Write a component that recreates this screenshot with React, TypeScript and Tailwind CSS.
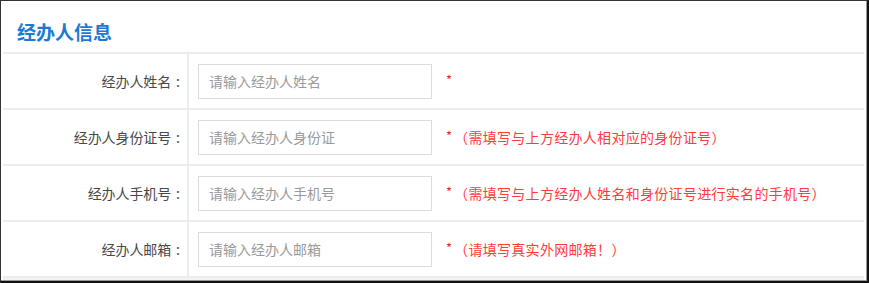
import React from "react";

const rows = [
  { label: "经办人姓名", placeholder: "请输入经办人姓名", hint: "" },
  { label: "经办人身份证号", placeholder: "请输入经办人身份证", hint: "（需填写与上方经办人相对应的身份证号）" },
  { label: "经办人手机号", placeholder: "请输入经办人手机号", hint: "（需填写与上方经办人姓名和身份证号进行实名的手机号）" },
  { label: "经办人邮箱", placeholder: "请输入经办人邮箱", hint: "（请填写真实外网邮箱！）" },
];

export default function App() {
  return (
    <div
      className="w-[869px] h-[283px] bg-white border-l border-t border-l-[#333] border-t-[#333] border-r-2 border-b-2 border-r-[#111] border-b-[#111] overflow-hidden"
      style={{ fontFamily: '"Noto Sans CJK SC", "Noto Sans", sans-serif' }}
    >
      <div className="h-full border-r border-b border-[#9a9a9a] flex flex-col">
        <div className="h-[51px] pt-[11px] pl-[16px] flex items-center text-[19px] font-bold text-[#1b7ad3]">
          经办人信息
        </div>
        <div className="mx-[2px] border-t-2 border-[#ececec]">
          {rows.map((r) => (
            <div key={r.label} className="h-[56px] flex border-b-2 border-[#ececec]">
              <div className="w-[186px] shrink-0 border-r-2 border-[#ececec] flex items-center justify-end pr-[7px] text-[14px] text-[#484848]">
                <span className="tracking-[-0.1px]">{r.label}</span>
                <span className="ml-[5px]">:</span>
              </div>
              <div className="flex items-center pl-[9px]">
                <input
                  className="w-[234px] h-[35px] border border-[#dcdcdc] px-[10px] text-[14px] text-[#333] placeholder:text-[#9a9a9a] outline-none"
                  placeholder={r.placeholder}
                />
                <span className="ml-[14px] text-[13px] text-[#ff2020] leading-none -mt-[4px]">*</span>
                {r.hint && (
                  <span className="ml-[2px] text-[14px] tracking-[0.3px] text-[#ff3b3b]">{r.hint}</span>
                )}
              </div>
            </div>
          ))}
        </div>
        <div className="flex-1 mx-[2px] bg-[#f2f2f2]" />
      </div>
    </div>
  );
}
